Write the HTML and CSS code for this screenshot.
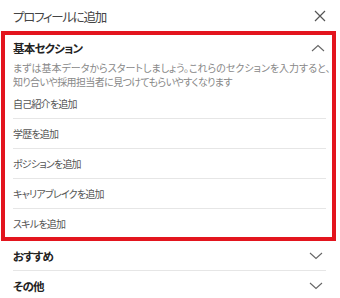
FILE: index.html
```html
<!DOCTYPE html>
<html lang="ja">
<head>
<meta charset="utf-8">
<link rel="stylesheet" href="styles.css">
</head>
<body>
<div class="dialog">
  <div class="header">
    <span class="title">プロフィールに追加</span>
    <svg class="close" width="12" height="12" viewBox="0 0 12 12"><path d="M1 1L11 11M11 1L1 11" stroke="#555" stroke-width="1.2" fill="none"/></svg>
  </div>
  <div class="section open">
    <div class="sec-head">
      <span class="sec-title">基本セクション</span>
      <svg class="chev" width="14" height="8" viewBox="0 0 14 8"><path d="M1 7L7 1.5L13 7" stroke="#666" stroke-width="1.1" fill="none"/></svg>
    </div>
    <p class="desc">まずは基本データからスタートしましょう。これらのセクションを入力すると、<br><span class="l2">知り合いや採用担当者に見つけてもらいやすくなります</span></p>
    <ul class="items">
      <li>自己紹介を追加</li>
      <li>学歴を追加</li>
      <li>ポジションを追加</li>
      <li>キャリアブレイクを追加</li>
      <li>スキルを追加</li>
    </ul>
  </div>
  <div class="row">
    <span class="sec-title">おすすめ</span>
    <svg class="chev" width="14" height="8" viewBox="0 0 14 8"><path d="M1 1L7 6.5L13 1" stroke="#666" stroke-width="1.1" fill="none"/></svg>
  </div>
  <div class="row last">
    <span class="sec-title">その他</span>
    <svg class="chev" width="14" height="8" viewBox="0 0 14 8"><path d="M1 1L7 6.5L13 1" stroke="#666" stroke-width="1.1" fill="none"/></svg>
  </div>
</div>
</body>
</html>
```

FILE: styles.css
```css
html, body {
  margin: 0;
  padding: 0;
  background: #fff;
}
body {
  font-family: "Noto Sans CJK JP", "Noto Sans", sans-serif;
  font-feature-settings: "palt";
  color: #333;
}
.dialog {
  width: 340px;
  height: 298px;
  overflow: hidden;
  padding: 0 14px 0 13px;
  box-sizing: border-box;
}
.header {
  height: 31px;
  display: flex;
  align-items: center;
  justify-content: space-between;
  padding-top: 1px;
  box-sizing: border-box;
}
.title {
  font-size: 12.5px;
  color: #444;
  letter-spacing: -1.3px;
}
.section {
  margin: 0 -10px 0 -12px;
  border: 4px solid #e3151e;
  border-bottom-width: 4px;
  padding: 0 6px 0 8px;
}
.sec-head {
  height: 26px;
  display: flex;
  align-items: center;
  justify-content: space-between;
}
.sec-title {
  font-size: 11.5px;
  font-weight: 700;
  color: #222;
  letter-spacing: -0.8px;
}
.chev {
  margin-right: 1px;
}
.desc {
  margin: 0;
  font-size: 10px;
  line-height: 14px;
  color: #888;
  white-space: nowrap;
  height: 28px;
}
.desc .l2 {
  letter-spacing: -0.6px;
}
.items {
  list-style: none;
  margin: 0;
  padding: 0;
}
.items li {
  height: 29px;
  display: flex;
  align-items: center;
  font-size: 10px;
  color: #555;
  letter-spacing: -0.8px;
  border-bottom: 1px solid #e6e6e6;
}
.items li:last-child {
  border-bottom: none;
  height: 28px;
}
.row {
  height: 29px;
  display: flex;
  align-items: center;
  justify-content: space-between;
  border-bottom: 1px solid #e6e6e6;
  padding-right: 2px;
}
.row.last {
  border-bottom: none;
}
```
